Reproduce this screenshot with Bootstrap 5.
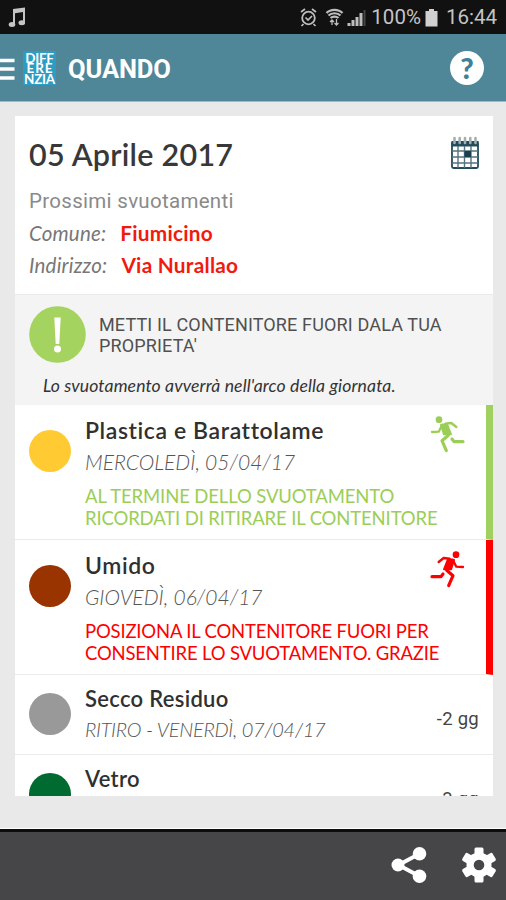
<!DOCTYPE html>
<html lang="it">
<head>
<meta charset="utf-8">
<meta name="viewport" content="width=device-width, initial-scale=1">
<title>Quando</title>
<link href="https://cdn.jsdelivr.net/npm/bootstrap@5.3.0/dist/css/bootstrap.min.css" rel="stylesheet">
<style>
html,body{height:900px;overflow:hidden}
body{background:#e9e9e9;font-family:Lato,"Liberation Sans",sans-serif;color:#333}
svg{display:block;flex:none}
.status{height:34px;background:#111;color:#c4c4c4;font:400 20.5px/36px Roboto,sans-serif}
.clock{margin-right:9px}
.appbar{height:68px;background:#4f8799;border-bottom:1px solid #9dbac5}
.appbar h1{font:700 25.5px/68px Roboto,sans-serif;letter-spacing:-.1px;padding-top:2px}
.logo{width:33px;height:34px;background:#2d9cc2;color:#fff;font:700 13.5px/10.5px Lato,sans-serif;letter-spacing:-.3px;padding-top:2px}
.logo .wide{letter-spacing:.8px;margin-right:-.8px}
.help{width:34px;height:34px;color:#3f8196;font:900 29px/34px Lato,sans-serif;margin-right:22px}
.sheet{width:478px;height:679.5px;margin:14px 0 0 15px}
.summary{height:178px;padding:20px 13px 0 14px}
.today{font-size:30.5px;line-height:36px;font-weight:600;color:#383838;letter-spacing:.25px}
.next-up{font:400 20.5px/32px Roboto,sans-serif;color:#8a8a8a;margin-top:13px;letter-spacing:.3px}
.place{font-size:20px;line-height:32px}
.place em{color:#777;font-size:20.5px;letter-spacing:.2px}
.place b{color:#f21a0c;font-size:20.8px;letter-spacing:.25px;margin-left:14px}
.notice{height:111px;background:#f4f4f4;border-top:1px solid #eaeaea;padding:11px 14px 0}
.alert-dot{width:57px;height:57px}
.notice-text{font:400 18px/21.5px Roboto,sans-serif;color:#505050;letter-spacing:.15px;padding-top:1px;margin-left:13px}
.notice-sub{font-size:17.6px;line-height:24px;margin:11px 0 0 14px;letter-spacing:.11px}
.pickup{border-bottom:1px solid #ebebeb;padding-left:14px}
.tall{height:135px;padding-top:10px}
.short{height:79.5px;padding-top:9px}
.dot{width:42px;height:42px;margin:0 14px 0 0}
.tall .dot{margin-top:15px}
.short .dot{margin-top:9px}
.kind{font-size:22px;line-height:30px;font-weight:600;color:#303030;letter-spacing:.3px}
.tall .kind{font-size:23px;letter-spacing:.6px}
.day{font-size:20px;line-height:30px;font-weight:300;font-style:italic;color:#555;letter-spacing:-.27px}
.tall .day{margin-top:2px;font-size:21px;letter-spacing:0}
.msg{font-size:18.5px;line-height:22px;margin-top:8px;letter-spacing:-.13px}
.stop .msg{letter-spacing:-.18px}
.entry{min-width:0}
.icon-cell{margin-right:20px}
.go{border-right:7px solid #9fd060}.go .msg,.go svg{color:#9bce56}
.stop{border-right:7px solid #f00}.stop .msg,.stop svg{color:#f00}
.days{font:400 18.5px/24px Roboto,sans-serif;color:#444;letter-spacing:.25px;margin:23px 14px 0 0}
.toolbar{height:71px;background:#464648;border-top:3px solid #0c0c0c;padding:0 9px 2px 0;box-shadow:0 -1px #fff}
.gear{margin-left:34px}
</style>
<script src="https://cdn.jsdelivr.net/npm/bootstrap@5.3.0/dist/js/bootstrap.bundle.min.js"></script>
</head>
<body class="d-flex flex-column">
<svg width="0" height="0" class="position-absolute"><defs>
<g id="runner" fill="none" stroke="currentColor" stroke-linecap="round" stroke-linejoin="round">
<circle cx="81" cy="14" r="10" fill="currentColor" stroke="none"/>
<path d="M62 26L44 24L29 36" stroke-width="7"/><path d="M71 29L82 50L102 51" stroke-width="7"/>
<path d="M57 27L75 30L66 58L45 58Z" fill="currentColor" stroke-width="6"/>
<path d="M53 61L72 77L59 107" stroke-width="9.500"/><path d="M42 72L36 80L9 80" stroke-width="9.500"/></g>
</defs></svg>

<div class="status d-flex align-items-center flex-shrink-0">
<svg width="28" height="34" viewBox="0 0 28 34" fill="#c4c4c4"><path d="M13 9l12-1.500v16h-2V12l-8 1.200V25h-2z"/><ellipse cx="12" cy="24.500" rx="3.300" ry="2.500"/><ellipse cx="21.800" cy="22.800" rx="3.300" ry="2.500"/></svg>
<svg class="ms-auto" width="71" height="34" viewBox="3 0 71 34" fill="none" stroke="#bdbdbd">
<circle cx="15.500" cy="18" r="6.300" stroke-width="1.800"/><path d="M8 12l4-3M23 12l-4-3M10.500 24l-2 2M20.500 24l2 2M12.500 17.500l2.500 2.500 4-4" stroke-width="1.700"/>
<path d="M33.500 13c4-4.300 12-4.300 16 0M35.500 15.500c3-3 9-3 12 0M37.500 18c2-1.800 6-1.800 8 0" stroke-width="2.200"/><path d="M39 20v5M37 22l2-2 2 2M43.500 19v6M41.500 23l2 2 2-2" stroke-width="1.300"/>
<path d="M56 26v-3M60 26v-6M64 26v-9M68 26V13" stroke-width="3"/><path d="M71.500 26V10" stroke="#444" stroke-width="2"/></svg>
<span class="pct ms-1">100%</span>
<svg class="ms-1" width="13" height="34" viewBox="0 0 13 34" fill="#d0d0d0"><path d="M4 9h5v2h3.500v15.500H.5V11H4z"/></svg>
<span class="clock ms-2">16:44</span>
</div>

<header class="appbar d-flex align-items-center flex-shrink-0 text-white">
<svg width="15" height="34" viewBox="0 0 15 34"><path d="M0 9.500h14.500M0 18h14.500M0 27h14.500" stroke="#fff" stroke-width="3.300"/></svg>
<div class="logo text-center ms-2 me-2">DIFF<br><span class="wide">ERE</span><br>NZIA</div>
<h1 class="m-0 ps-1">QUANDO</h1>
<div class="help rounded-circle bg-white text-center ms-auto">?</div>
</header>

<main class="flex-grow-1">
<div class="sheet bg-white overflow-hidden">
<section class="summary d-flex justify-content-between">
<div>
<div class="today">05 Aprile 2017</div>
<div class="next-up">Prossimi svuotamenti</div>
<div class="place"><em>Comune:</em><b>Fiumicino</b></div>
<div class="place"><em>Indirizzo:</em><b>Via Nurallao</b></div>
</div>
<svg width="30" height="34" viewBox="0 0 30 34"><rect x="2" y="6" width="26" height="26" rx="1.500" fill="#fff" stroke="#234c5b" stroke-width="1.800"/><path d="M1.500 5h27v5.500h-27z" fill="#234c5b"/><path d="M2 15h26M2 21h26M2 27h26M8 10v22M14.500 10v22M21 10v22" stroke="#56727e" stroke-width="1.400"/><path d="M14.500 15H21v6h-6.500z" fill="#173f4e"/><path d="M4.500 2v5M9.700 2v5M15 2v5M20.300 2v5M25.500 2v5" stroke="#a3b0b3" stroke-width="2.600" stroke-linecap="round"/></svg>
</section>

<section class="notice">
<div class="d-flex">
<svg class="alert-dot" viewBox="0 0 57 57"><circle cx="28.500" cy="28.500" r="28.300" fill="#a5d35f"/><path d="M25.300 11.500h6.400L30.300 38h-3.600z" fill="#fff"/><circle cx="28.500" cy="43" r="3.500" fill="#fff"/></svg>
<div class="notice-text d-flex align-items-center text-nowrap"><div>METTI IL CONTENITORE FUORI DALA TUA<br>PROPRIETA'</div></div>
</div>
<div class="notice-sub fst-italic">Lo svuotamento avverrà nell'arco della giornata.</div>
</section>

<article class="pickup tall go d-flex">
<svg class="dot" viewBox="0 0 42 42"><circle cx="21" cy="21" r="21" fill="#ffca32"/></svg>
<div class="entry flex-grow-1 text-nowrap"><div class="kind">Plastica e Barattolame</div><div class="day">MERCOLEDÌ, 05/04/17</div><div class="msg">AL TERMINE DELLO SVUOTAMENTO<br>RICORDATI DI RITIRARE IL CONTENITORE</div></div>
<div class="icon-cell"><svg width="37" height="38" viewBox="0 0 111 114"><use href="#runner" transform="translate(111 0) scale(-1 1)"/></svg></div>
</article>

<article class="pickup tall stop d-flex">
<svg class="dot" viewBox="0 0 42 42"><circle cx="21" cy="21" r="21" fill="#993300"/></svg>
<div class="entry flex-grow-1 text-nowrap"><div class="kind">Umido</div><div class="day">GIOVEDÌ, 06/04/17</div><div class="msg">POSIZIONA IL CONTENITORE FUORI PER<br>CONSENTIRE LO SVUOTAMENTO. GRAZIE</div></div>
<div class="icon-cell"><svg width="37" height="38" viewBox="0 0 111 114"><use href="#runner"/></svg></div>
</article>

<article class="pickup short d-flex">
<svg class="dot" viewBox="0 0 42 42"><circle cx="21" cy="21" r="21" fill="#999"/></svg>
<div class="flex-grow-1"><div class="kind">Secco Residuo</div><div class="day">RITIRO - VENERDÌ, 07/04/17</div></div>
<div class="days">-2 gg</div>
</article>

<article class="pickup short d-flex">
<svg class="dot" viewBox="0 0 42 42"><circle cx="21" cy="21" r="21" fill="#006b31"/></svg>
<div class="flex-grow-1"><div class="kind">Vetro</div></div>
<div class="days">-3 gg</div>
</article>
</div>
</main>

<footer class="toolbar d-flex align-items-center justify-content-end flex-shrink-0">
<svg width="36" height="36" viewBox="0 0 36 36" fill="#fff"><path d="M29 6.500L7.500 18 29 29.500" fill="none" stroke="#fff" stroke-width="4"/><circle cx="28.500" cy="6.800" r="6.800"/><circle cx="7" cy="18" r="6.500"/><circle cx="28.500" cy="29.200" r="6.800"/></svg>
<svg class="gear" width="36" height="36" viewBox="-18 -18 36 36"><g fill="#fff"><circle r="12.500"/><g id="tooth"><rect x="-4.500" y="-17.500" width="9" height="35" rx="1.500"/></g><use href="#tooth" transform="rotate(60)"/><use href="#tooth" transform="rotate(120)"/></g><circle r="5.300" fill="#464648"/></svg>
</footer>
</body>
</html>
